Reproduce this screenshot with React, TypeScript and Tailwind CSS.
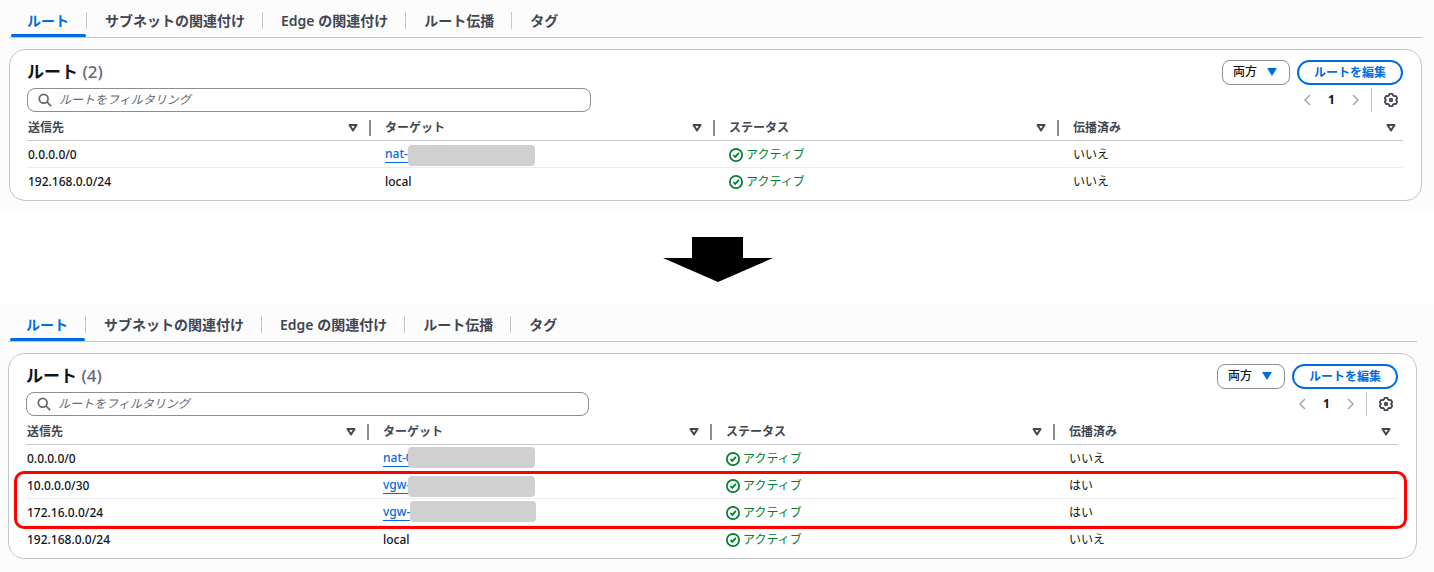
import { useState } from "react";
import clsx from "clsx";

const tabs = ["ルート", "サブネットの関連付け", "Edge の関連付け", "ルート伝播", "タグ"];
const columns = ["送信先", "ターゲット", "ステータス", "伝播済み"];

type Route = {
  dest: string;
  target: string;
  mask?: string;
  propagated: string;
};

const before: Route[] = [
  { dest: "0.0.0.0/0", target: "nat-", mask: "left-[23px] top-1 w-[127px]", propagated: "いいえ" },
  { dest: "192.168.0.0/24", target: "local", propagated: "いいえ" },
];

const after: Route[] = [
  { dest: "0.0.0.0/0", target: "nat-0", mask: "left-[25px] top-0.5 w-[127px]", propagated: "いいえ" },
  { dest: "10.0.0.0/30", target: "vgw-", mask: "left-[25px] top-1 w-[127px]", propagated: "はい" },
  { dest: "172.16.0.0/24", target: "vgw-", mask: "left-[27px] top-0.5 w-[126px]", propagated: "はい" },
  { dest: "192.168.0.0/24", target: "local", propagated: "いいえ" },
];

function SearchIcon() {
  return (
    <svg className="size-[14px] shrink-0" viewBox="0 0 16 16" fill="none" stroke="#656871" strokeWidth="2">
      <circle cx="6.5" cy="6.5" r="5" />
      <path d="M10.2 10.2 15 15" />
    </svg>
  );
}

function GearIcon() {
  return (
    <svg className="size-[14px]" viewBox="0 0 16 16" fill="none" stroke="#424650" strokeWidth="2" strokeLinejoin="round">
      <path d="M6.3 1h3.4l.6 1.9 1.3.7 2-.4 1.6 2.9-1.3 1.4v1l1.3 1.4-1.6 2.9-2-.4-1.3.7-.6 1.9H6.300l-.6-1.900-1.300-.7-2 .4L.8 9.900l1.300-1.400v-1L.8 6.100l1.600-2.900 2 .4 1.300-.7z" />
      <circle cx="8" cy="8" r="1.5" />
    </svg>
  );
}

function CheckIcon() {
  return (
    <svg className="size-[14px] shrink-0" viewBox="0 0 16 16" fill="none" stroke="#00802f" strokeWidth="2">
      <circle cx="8" cy="8" r="7" />
      <path d="m5 8 2.200 2.200L11.300 5.500" />
    </svg>
  );
}

function SortIcon() {
  return (
    <svg className="size-[10px]" viewBox="0 0 10 10" fill="none" stroke="#424650" strokeWidth="2" strokeLinejoin="round">
      <path d="M1.500 2h7L5 7.500z" />
    </svg>
  );
}

function Chevron({ d }: { d: string }) {
  return (
    <svg className="h-3 w-2" viewBox="0 0 8 12" fill="none" stroke="#a4a8b0" strokeWidth="1.500">
      <path d={d} />
    </svg>
  );
}

function RouteTable({ routes, highlight }: { routes: Route[]; highlight?: boolean }) {
  return (
    <div className="relative">
      <table className="w-full table-fixed border-collapse text-xs">
        <thead>
          <tr className="h-7 border-b border-[#c6c6cd]">
            {columns.map((name, i) => (
              <th key={name} className="p-0 pt-1 text-left font-bold text-[#424650]">
                <div className={clsx("flex items-center", i === 0 ? "pl-px" : "pl-[14px]")}>
                  <span className="flex-1">{name}</span>
                  <button aria-label={`${name}で並べ替え`} className={i === 3 ? "mr-[7px]" : "mr-[11px]"}>
                    <SortIcon />
                  </button>
                  {i < 3 && <span className="h-4 w-0.5 bg-[#8c8c94]" />}
                </div>
              </th>
            ))}
          </tr>
        </thead>
        <tbody className="text-[#0f141a]">
          {routes.map((route) => (
            <tr key={route.dest} className="h-[27px] border-b border-[#ebebf0] last:border-b-0">
              <td className="p-0 pt-0.5 pl-px font-medium">{route.dest}</td>
              <td className="p-0 pl-[14px] font-medium">
                {route.mask ? (
                  <div className="relative flex h-[26px] items-center pt-0.5">
                    <a href="#" className="border-b border-[#006ce0] leading-4 text-[#006ce0]">
                      {route.target}
                    </a>
                    <span className={clsx("absolute h-[21px] rounded-[4px] bg-[#d0d0d0]", route.mask)} />
                  </div>
                ) : (
                  <div className="pt-0.5">{route.target}</div>
                )}
              </td>
              <td className="p-0 pt-0.5 pl-[14px]">
                <span className="flex items-center gap-[3px] text-[#00802f]">
                  <CheckIcon />
                  アクティブ
                </span>
              </td>
              <td className="p-0 pt-0.5 pl-[14px]">{route.propagated}</td>
            </tr>
          ))}
        </tbody>
      </table>
      {highlight && (
        <div className="pointer-events-none absolute top-[55px] -right-[9px] -left-3 h-[58px] rounded-[10px] border-3 border-[#ff0000]" />
      )}
    </div>
  );
}

function RoutesSection({ id, routes, highlight, className }: {
  id: string;
  routes: Route[];
  highlight?: boolean;
  className: string;
}) {
  const [filter, setFilter] = useState("");

  return (
    <section className={clsx("bg-[#fcfcfc]", className)}>
      <div role="tablist" className="flex h-[38px] items-center border-b border-[#c6c6cd] pt-1">
        {tabs.map((tab, i) => (
          <div key={tab} className="relative flex h-full items-center">
            {i > 0 && <span className="h-[17px] w-px bg-[#c6c6cd]" />}
            <button
              role="tab"
              aria-selected={i === 0}
              className={clsx("pr-[17px] pl-[18px] text-sm font-semibold", i === 0 ? "text-[#006ce0]" : "text-[#424650]")}
            >
              {tab}
            </button>
            {i === 0 && <span className="absolute right-0 bottom-0 left-0.5 h-[3px] rounded-[2px] bg-[#006ce0]" />}
          </div>
        ))}
      </div>

      <div className="mt-[11px] rounded-2xl border border-[#c6c6cd] bg-white pt-[10px] pr-[18px] pb-[6px] pl-[17px]">
        <div className="flex h-6 items-center gap-[7px]">
          <h2 className="flex-1 text-[17px] font-bold text-[#0f141a]">
            ルート <span className="font-medium text-[#656871]">({routes.length})</span>
          </h2>
          <div className="relative flex items-center">
            <select
              aria-label="表示するルート"
              className="h-[25px] w-[68px] appearance-none rounded-lg border border-[#8c8c94] bg-white pl-[10px] text-xs font-medium text-[#0f141a]"
            >
              <option>両方</option>
            </select>
            <svg className="pointer-events-none absolute right-[13px] h-2 w-[10px]" viewBox="0 0 10 8" fill="#006ce0">
              <path d="M0 0h10L5 8z" />
            </svg>
          </div>
          <button className="h-[25px] w-[106px] rounded-full border-2 border-[#006ce0] bg-white pt-0.5 text-xs font-bold text-[#006ce0]">
            ルートを編集
          </button>
        </div>

        <div className="mt-1 flex items-center justify-between">
          <label
            htmlFor={id}
            className="flex h-6 w-[41%] items-center gap-[7px] rounded-lg border border-[#8c8c94] bg-white pl-[10px]"
          >
            <SearchIcon />
            <input
              id={id}
              type="search"
              aria-label="ルートをフィルタリング"
              placeholder="ルートをフィルタリング"
              value={filter}
              onChange={(e) => setFilter(e.target.value)}
              className="min-w-0 flex-1 text-xs outline-none placeholder:text-[#656871] placeholder:italic"
            />
          </label>
          <div className="flex h-6 items-center pr-[5px]">
            <button aria-label="前のページ">
              <Chevron d="M7 1 2 6l5 5" />
            </button>
            <span className="w-[41px] text-center text-xs font-bold text-[#0f141a]">1</span>
            <button aria-label="次のページ">
              <Chevron d="m1 1 5 5-5 5" />
            </button>
            <span className="mr-3 ml-[11px] h-6 w-px bg-[#c6c6cd]" />
            <button aria-label="設定">
              <GearIcon />
            </button>
          </div>
        </div>

        <RouteTable routes={routes} highlight={highlight} />
      </div>
    </section>
  );
}

export default function App() {
  return (
    <main className="bg-white font-['Noto_Sans','Noto_Sans_CJK_JP',sans-serif]">
      <RoutesSection id="filter-before" routes={before} className="pr-3 pb-[9px] pl-[9px]" />
      <div className="flex justify-center pt-[27px] pb-[22px] pl-0.5">
        <svg className="h-[45px] w-[110px]" viewBox="0 0 110 45" aria-label="変更後">
          <path d="M29 0h51v21h30L55 45 0 21h29z" />
        </svg>
      </div>
      <RoutesSection id="filter-after" routes={after} highlight className="pr-[17px] pb-[14px] pl-2" />
    </main>
  );
}
